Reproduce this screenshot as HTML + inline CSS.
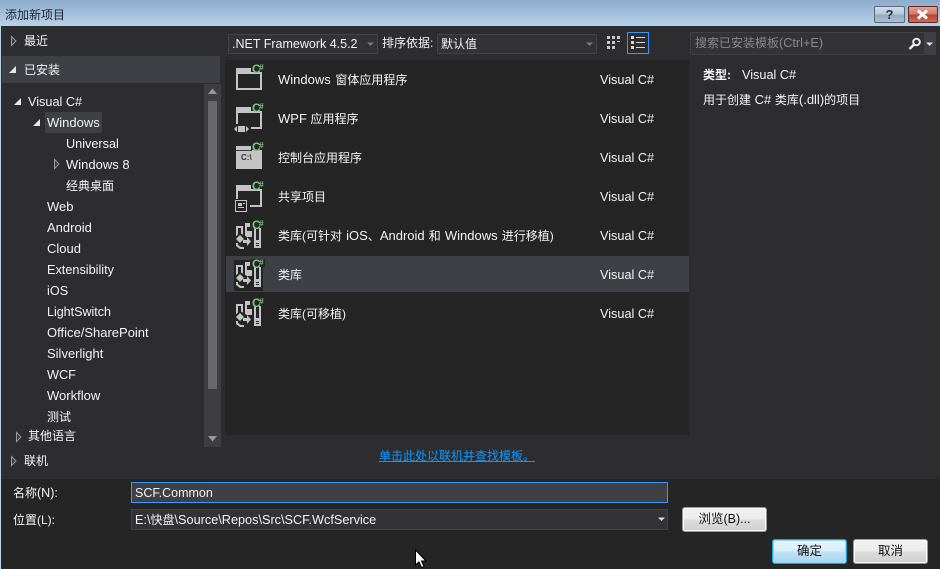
<!DOCTYPE html>
<html lang="zh"><head><meta charset="utf-8"><title>添加新项目</title>
<style>
html,body{margin:0;padding:0;background:#2d2d30}
#r{position:relative;width:940px;height:569px;overflow:hidden;background:#2d2d30;font-family:"Liberation Sans","Noto Sans CJK SC",sans-serif;font-size:12.7px;color:#f4f4f4}
#r div{position:absolute;box-sizing:border-box}
.t{line-height:20px;white-space:nowrap;height:20px}
.w{font-size:13px}
.c{font-size:12px}
svg{position:absolute;overflow:visible}
.cs{font:bold 12px "Liberation Sans",sans-serif;fill:#7cc77c}
.cs2{font:bold 8.500px "Liberation Sans",sans-serif;fill:#7cc77c}
.btn{border:1px solid #9a9a9a;border-radius:3px;background:linear-gradient(#f3f3f3 0%,#ececec 48%,#dcdcdc 52%,#cfcfcf 100%);color:#111;text-align:center;line-height:23px;font-size:12.500px;box-shadow:inset 0 0 0 1px #fafafa}
</style></head><body>
<div id="r">
<svg width="0" height="0" style="position:absolute"><defs>
<g id="win"><path fill="#c4c4c4" d="M0 0H15V4H26V22H13V20H24V6H2V20H13V22H0Z"/></g>
<g id="wpf"><path fill="#c4c4c4" d="M0 0H15V4H26V22H15V20H24V6H2V17H0Z"/><path fill="#c4c4c4" d="M2 19H9V25H2ZM1 19V25L-2 22ZM10 19V25L13 22Z"/></g>
<g id="con"><path fill="#c4c4c4" d="M0 0H15V4H26V23H0Z"/><rect x="0" y="4" width="16" height="1" fill="#3a3a3a"/></g>
<g id="sha"><path fill="#c4c4c4" d="M0 0H15V4H26V22H14V20H24V6H2V14H0Z"/><rect x="-0.500" y="15.500" width="11" height="11" fill="#252526" stroke="#c4c4c4"/><path fill="#c4c4c4" d="M2 18H6V21H2ZM2 22H8V23H2ZM7 18H9V19H7Z"/></g>
<g id="lib"><path fill="#c4c4c4" d="M0 0H7V12H5V2H2V10H0Z"/><path fill="#c4c4c4" d="M9 -3H14V1H11V5H16V22H9Z"/><path fill="#c4c4c4" d="M18 0H25V22H18Z"/><path fill="#252526" d="M20 2H23V14H20ZM20 17H23V18H20ZM20 19H23V20H20Z"/><path fill="#252526" d="M4 7L11 11H16V24H-1V11Z"/><path fill="#c4c4c4" d="M4 9L8 13L4 17L0 13ZM0 17H2V19L5 21H8V23H4L0 20ZM7 14H11V11L15 15.500L11 20V17H7Z"/></g>
</defs></svg>

<!-- title bar -->
<div style="left:0;top:0;width:940px;height:26px;background:linear-gradient(#8dabcb,#b9d2ea)"></div>
<div class="t" style="left:5px;top:5px;color:#1c2530;font-size:12px">添加新项目</div>
<div style="left:874px;top:6px;width:31px;height:17px;border:1px solid #5a6a7c;border-radius:2px;background:linear-gradient(#cfdded 0%,#b4c8dc 50%,#93aac2 52%,#a9c0d6 100%);color:#333;font:bold 13px/15px 'Liberation Sans',sans-serif;text-align:center">?</div>
<div style="left:908px;top:6px;width:30px;height:17px;border:1px solid #5c2a22;border-radius:2px;background:linear-gradient(#e2a093 0%,#cf7b6c 48%,#b8402e 52%,#c9705e 100%)"></div>
<svg style="left:915px;top:9px" width="16" height="11"><path d="M3 1.500L12 9.500M12 1.500L3 9.500" stroke="#fff" stroke-width="3" fill="none"/></svg>
<div style="left:0;top:26px;width:1px;height:543px;background:#b9d2ea"></div>

<!-- left panel -->
<svg style="left:11px;top:36px" width="6" height="10"><path d="M.5 .5L5 5L.5 9.500Z" fill="#3a3a3d" stroke="#9a9a9a"/></svg>
<div class="t" style="left:24px;top:31px;font-size:12px">最近</div>
<div style="left:2px;top:56px;width:218px;height:27px;background:#3f3f46"></div>
<svg style="left:9px;top:65px" width="8" height="9"><path d="M7 1V8H0Z" fill="#e8e8e8"/></svg>
<div class="t" style="left:24px;top:60px;font-size:12px">已安装</div>

<svg style="left:14px;top:97px" width="8" height="9"><path d="M7 1V8H0Z" fill="#e8e8e8"/></svg>
<div class="t" style="left:28px;top:92px">Visual C#</div>
<div style="left:45px;top:112px;width:57px;height:21px;background:#3f3f46"></div>
<svg style="left:33px;top:118px" width="8" height="9"><path d="M7 1V8H0Z" fill="#e8e8e8"/></svg>
<div class="t w" style="left:47px;top:113px">Windows</div>
<div class="t" style="left:66px;top:134px">Universal</div>
<svg style="left:54px;top:159px" width="6" height="10"><path d="M.5 .5L5 5L.5 9.500Z" fill="#3a3a3d" stroke="#9a9a9a"/></svg>
<div class="t w" style="left:66px;top:155px">Windows 8</div>
<div class="t" style="left:66px;top:176px;font-size:12px">经典桌面</div>
<div class="t w" style="left:47px;top:197px">Web</div>
<div class="t w" style="left:47px;top:218px">Android</div>
<div class="t w" style="left:47px;top:239px">Cloud</div>
<div class="t" style="left:47px;top:260px">Extensibility</div>
<div class="t" style="left:47px;top:281px">iOS</div>
<div class="t" style="left:47px;top:302px;font-size:12.500px">LightSwitch</div>
<div class="t w" style="left:47px;top:323px">Office/SharePoint</div>
<div class="t w" style="left:47px;top:344px">Silverlight</div>
<div class="t" style="left:47px;top:365px">WCF</div>
<div class="t w" style="left:47px;top:386px">Workflow</div>
<div class="t" style="left:47px;top:407px;font-size:12px">测试</div>
<svg style="left:16px;top:432px" width="6" height="10"><path d="M.5 .5L5 5L.5 9.500Z" fill="#3a3a3d" stroke="#9a9a9a"/></svg>
<div style="left:24px;top:428px;width:180px;height:13px;overflow:hidden"><div class="t" style="left:4px;top:-2px;font-size:12px">其他语言</div></div>
<div style="left:204px;top:84px;width:17px;height:363px;background:#3e3e42"></div>
<div style="left:208px;top:101px;width:9px;height:288px;background:#686868"></div>
<svg style="left:207px;top:88px" width="11" height="8"><path d="M5.500 .5L10 6H1Z" fill="#999"/></svg>
<svg style="left:207px;top:435px" width="11" height="8"><path d="M1 1H10L5.500 6.500Z" fill="#999"/></svg>
<svg style="left:11px;top:456px" width="6" height="10"><path d="M.5 .5L5 5L.5 9.500Z" fill="#3a3a3d" stroke="#9a9a9a"/></svg>
<div class="t" style="left:24px;top:451px;font-size:12px">联机</div>

<!-- toolbar -->
<div style="left:228px;top:34px;width:150px;height:20px;background:#333337;border:1px solid #434346"></div>
<div class="t" style="left:232px;top:34px;font-size:12.500px">.NET Framework 4.5.2</div>
<svg style="left:367px;top:42px" width="8" height="5"><path d="M0 .5H7L3.500 4Z" fill="#777"/></svg>
<div class="t" style="left:382px;top:33px;font-size:12px">排序依据:</div>
<div style="left:437px;top:34px;width:160px;height:20px;background:#333337;border:1px solid #434346"></div>
<div class="t" style="left:441px;top:34px;font-size:12px">默认值</div>
<svg style="left:586px;top:42px" width="8" height="5"><path d="M0 .5H7L3.500 4Z" fill="#777"/></svg>
<svg style="left:607px;top:36px" width="14" height="15"><path fill="#c8c8c8" d="M0 0h3v3h-3zM5 0h3v3h-3zM10 0h3v3h-3zM0 5h3v3h-3zM5 5h3v3h-3zM10 5h3v1h-3zM0 10h3v3h-3zM5 10h3v3h-3z"/></svg>
<div style="left:627px;top:32px;width:22px;height:22px;border:1px solid #3399ff"></div>
<svg style="left:631px;top:36px" width="15" height="14"><path fill="#d8d8d8" d="M0 0h3v3h-3zM5 1h9v1h-9zM0 5h3v3h-3zM5 6h9v1h-9zM0 10h3v3h-3zM5 11h9v1h-9z"/></svg>

<!-- search -->
<div style="left:690px;top:32px;width:246px;height:23px;background:#333337;border:1px solid #3f3f46"></div>
<div style="left:924px;top:33px;width:11px;height:21px;background:#3f3f46"></div>
<div class="t" style="left:695px;top:33px;color:#8a8a8a;font-size:12.700px"><span class="c">搜索已安装模板</span>(Ctrl+E)</div>
<svg style="left:908px;top:37px" width="14" height="14"><circle cx="8.500" cy="5" r="3.300" fill="none" stroke="#eee" stroke-width="2"/><path d="M6 7.500L1.500 12" stroke="#eee" stroke-width="2.500"/></svg>
<svg style="left:926px;top:42px" width="8" height="5"><path d="M0 .5H7L3.500 4Z" fill="#ddd"/></svg>

<!-- list -->
<div style="left:225px;top:60px;width:464px;height:375px;background:#252526"></div>
<div style="left:226px;top:256px;width:463px;height:36px;background:#3f3f46"></div>

<svg style="left:236px;top:68px" width="28" height="24"><use href="#win"/></svg>
<svg style="left:236px;top:107px" width="28" height="26"><use href="#wpf"/></svg>
<svg style="left:236px;top:146px" width="28" height="24"><use href="#con"/><text x="5" y="14" style="font:bold 8px 'Liberation Sans',sans-serif;fill:#333">C:\</text></svg>
<svg style="left:236px;top:185px" width="28" height="28"><use href="#sha"/></svg>
<svg style="left:236px;top:226px" width="28" height="28"><use href="#lib"/></svg>
<div style="left:234px;top:260px;width:29px;height:31px;background:#252526"></div>
<svg style="left:236px;top:265px" width="28" height="28"><use href="#lib"/></svg>
<svg style="left:236px;top:304px" width="28" height="28"><use href="#lib"/></svg>

<svg style="left:250px;top:62px" width="16" height="12"><rect x="1" y="2" width="14" height="8" fill="#252526"/><text x="2" y="11" class="cs">C</text><text x="9" y="8" class="cs2">#</text></svg>
<svg style="left:250px;top:101px" width="16" height="12"><rect x="1" y="2" width="14" height="8" fill="#252526"/><text x="2" y="11" class="cs">C</text><text x="9" y="8" class="cs2">#</text></svg>
<svg style="left:250px;top:140px" width="16" height="12"><rect x="1" y="2" width="14" height="8" fill="#252526"/><text x="2" y="11" class="cs">C</text><text x="9" y="8" class="cs2">#</text></svg>
<svg style="left:250px;top:179px" width="16" height="12"><rect x="1" y="2" width="14" height="8" fill="#252526"/><text x="2" y="11" class="cs">C</text><text x="9" y="8" class="cs2">#</text></svg>
<svg style="left:250px;top:218px" width="16" height="12"><rect x="1" y="2" width="14" height="8" fill="#252526"/><text x="2" y="11" class="cs">C</text><text x="9" y="8" class="cs2">#</text></svg>
<svg style="left:250px;top:257px" width="16" height="12"><rect x="1" y="2" width="14" height="8" fill="#252526"/><text x="2" y="11" class="cs">C</text><text x="9" y="8" class="cs2">#</text></svg>
<svg style="left:250px;top:296px" width="16" height="12"><rect x="1" y="2" width="14" height="8" fill="#252526"/><text x="2" y="11" class="cs">C</text><text x="9" y="8" class="cs2">#</text></svg>

<div class="t w" style="left:278px;top:70px">Windows <span class="c" style="margin-left:1px">窗体应用程序</span></div>
<div class="t w" style="left:278px;top:109px">WPF <span class="c">应用程序</span></div>
<div class="t c" style="left:278px;top:148px">控制台应用程序</div>
<div class="t c" style="left:278px;top:187px">共享项目</div>
<div class="t w" style="left:278px;top:226px;word-spacing:.5px"><span class="c">类库(可针对</span> iOS<span class="c">、</span>Android <span class="c">和</span> Windows <span class="c">进行移植)</span></div>
<div class="t c" style="left:278px;top:265px">类库</div>
<div class="t c" style="left:278px;top:304px">类库(可移植)</div>
<div class="t" style="left:600px;top:70px">Visual C#</div>
<div class="t" style="left:600px;top:109px">Visual C#</div>
<div class="t" style="left:600px;top:148px">Visual C#</div>
<div class="t" style="left:600px;top:187px">Visual C#</div>
<div class="t" style="left:600px;top:226px">Visual C#</div>
<div class="t" style="left:600px;top:265px">Visual C#</div>
<div class="t" style="left:600px;top:304px">Visual C#</div>

<!-- details -->
<div class="t" style="left:703px;top:65px;font-size:12px;font-weight:bold">类型:</div>
<div class="t" style="left:742px;top:65px">Visual C#</div>
<div class="t w" style="left:703px;top:90px"><span class="c">用于创建</span> C# <span class="c">类库</span>(.dll)<span class="c">的项目</span></div>

<div class="t" style="left:379px;top:446px;font-size:12px;color:#0e97ff;text-decoration:underline">单击此处以联机并查找模板。</div>

<!-- bottom -->
<div style="left:1px;top:479px;width:939px;height:90px;background:#252526"></div>
<div class="t" style="left:13px;top:483px;font-size:12.500px"><span class="c">名称</span>(N):</div>
<div style="left:131px;top:482px;width:537px;height:21px;background:#3f3f46;border:1px solid #3399ff"></div>
<div class="t" style="left:135px;top:483px;font-size:12.500px">SCF.Common</div>
<div class="t" style="left:13px;top:510px;font-size:12px"><span class="c">位置</span>(L):</div>
<div style="left:131px;top:509px;width:537px;height:21px;background:#333337;border:1px solid #434346"></div>
<div class="t" style="left:135px;top:510px;font-size:12.700px">E:\<span class="c">快盘</span>\Source\Repos\Src\SCF.WcfService</div>
<svg style="left:658px;top:517px" width="8" height="5"><path d="M0 .5H7L3.500 4Z" fill="#ddd"/></svg>
<div class="btn" style="left:682px;top:507px;width:85px;height:25px">浏览(B)...</div>
<div class="btn" style="left:772px;top:539px;width:75px;height:25px;border-color:#1aa3d9;background:linear-gradient(#e9f5fc 0%,#d9eefa 48%,#bfe2f5 52%,#a9d5ee 100%);box-shadow:inset 0 0 0 1px #8fd8f5">确定</div>
<div class="btn" style="left:853px;top:539px;width:75px;height:25px">取消</div>

<svg style="left:414px;top:549px" width="14" height="20"><path d="M1.500 1V16L5 13L7.500 18.500L10 17.500L7.500 12H12Z" fill="#fff" stroke="#000"/></svg>
</div>
</body></html>
